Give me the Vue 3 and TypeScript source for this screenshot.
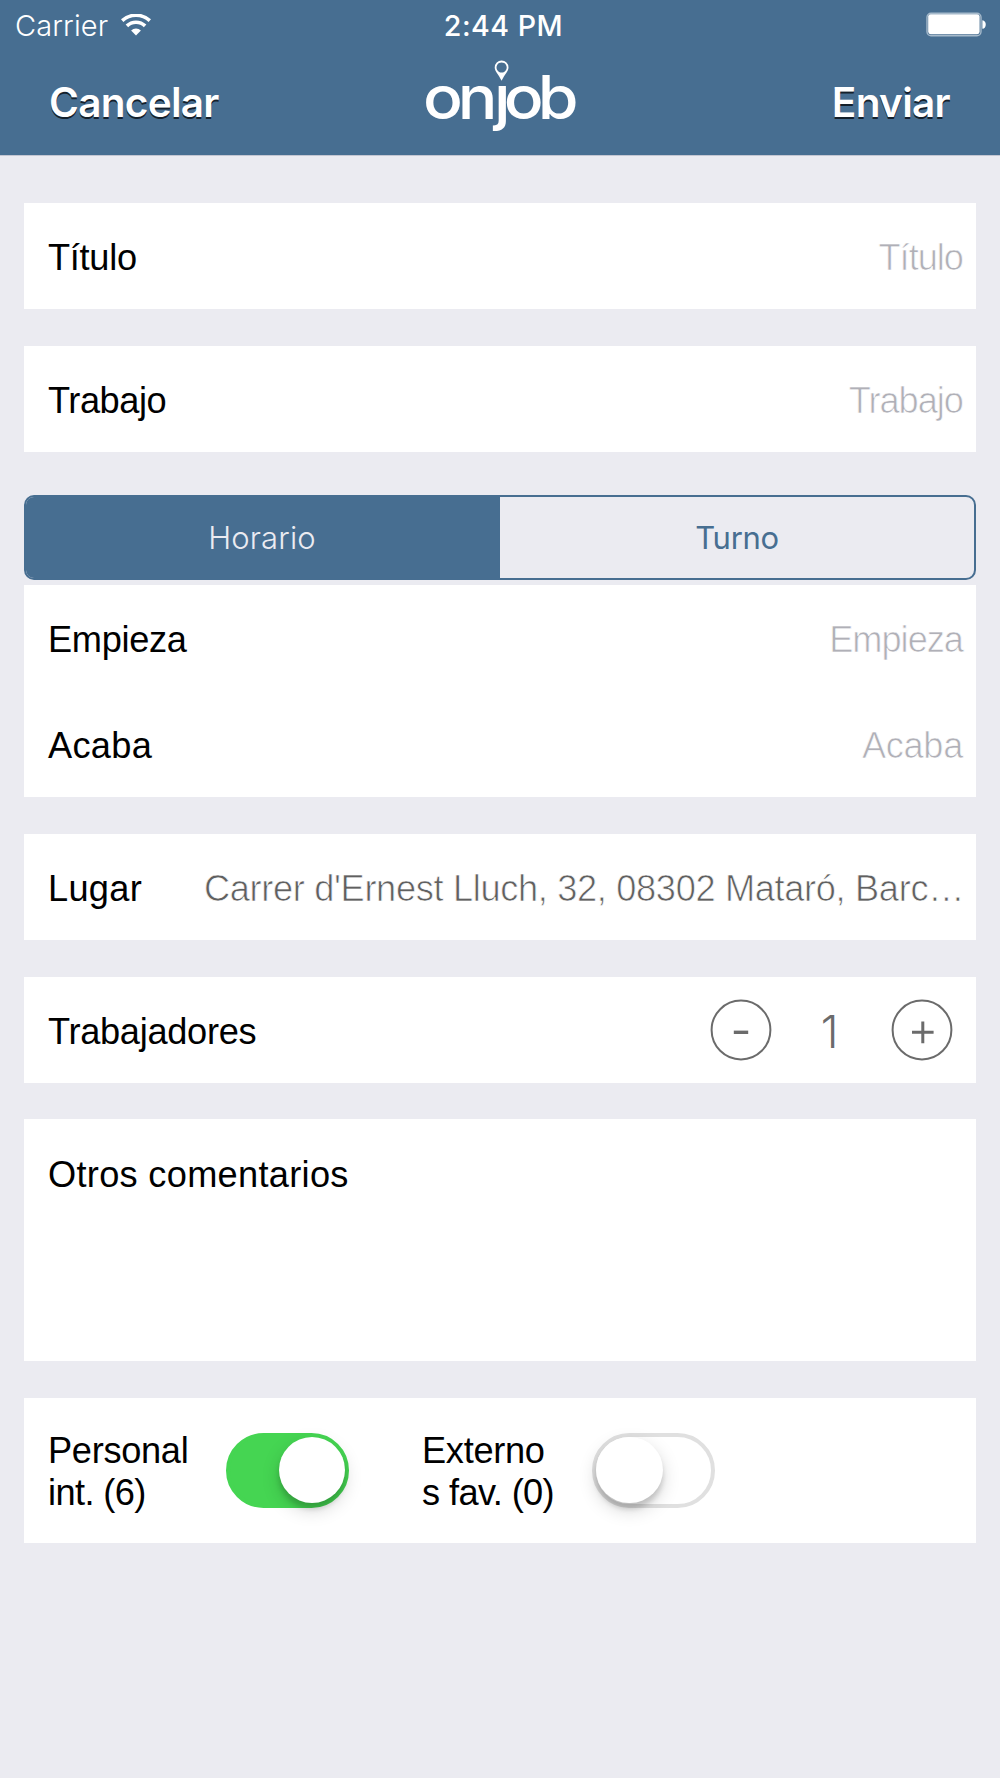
<script setup lang="ts">
import { ref } from 'vue'

type Mode = 'Horario' | 'Turno'

const modes: Mode[] = ['Horario', 'Turno']
const mode = ref<Mode>('Horario')
const workers = ref<number>(1)
const internal = ref<boolean>(true)
const external = ref<boolean>(false)
const place = "Carrer d'Ernest Lluch, 32, 08302 Mataró, Barc…"
</script>

<template>
  <div class="screen">
    <header class="header">
      <div class="status">
        <div class="carrier">
          <span>Carrier</span>
          <svg class="wifi" width="30" height="22" viewBox="0 0 30 22">
            <g fill="none" stroke="#fff" stroke-width="3.6">
              <path d="M1.2 6.6 A20.5 20.5 0 0 1 28.8 6.6" />
              <path d="M5.9 11.9 A13 13 0 0 1 24.1 11.9" />
            </g>
            <path d="M10.1 16.4 A7.2 7.2 0 0 1 19.9 16.4 L15 21.6 Z" fill="#fff" />
          </svg>
        </div>
        <span class="clock">2:44 PM</span>
        <svg class="battery" width="62" height="26" viewBox="0 0 62 26">
          <rect x="1" y="1.2" width="54" height="22.6" rx="4" fill="none" stroke="#a6bacb" stroke-width="1.4" />
          <rect x="2.2" y="2.2" width="51.4" height="20" rx="2.4" fill="#fff" />
          <path d="M56.4 8.2 C60.9 8.6 60.9 16.4 56.4 16.8 Z" fill="#fff" />
        </svg>
      </div>
      <nav class="nav">
        <span class="action cancel">Cancelar</span>
        <svg class="logo" width="160" height="80" viewBox="0 0 160 80">
          <text transform="scale(1.1 1)" y="60.6" x="2.8 34.3 67.2 76.1 107">onjob</text>
          <rect x="74" y="8" width="16" height="18.5" fill="#476e91" />
          <path
            fill="#fff"
            fill-rule="evenodd"
            d="M81.6 2.6 a6.9 6.9 0 0 1 6.9 6.9 c0 3.6 -3.6 6.6 -6.9 13.2 c-3.3 -6.6 -6.9 -9.6 -6.9 -13.2 a6.9 6.9 0 0 1 6.9 -6.9 Z M81.6 4.4 a5.1 5.1 0 1 0 0.01 0 Z"
          />
        </svg>
        <span class="action send">Enviar</span>
      </nav>
    </header>

    <main class="form">
      <section class="card row">
        <span class="label">Título</span><span class="value hint">Título</span>
      </section>
      <section class="card row second">
        <span class="label tight">Trabajo</span><span class="value hint">Trabajo</span>
      </section>

      <div class="segments">
        <div
          v-for="m in modes"
          :key="m"
          class="segment"
          :class="{ active: m === mode }"
          @click="mode = m"
        >{{ m }}</div>
      </div>

      <section class="card times">
        <div class="row">
          <span class="label">Empieza</span><span class="value hint">Empieza</span>
        </div>
        <div class="row">
          <span class="label loose">Acaba</span><span class="value hint last">Acaba</span>
        </div>
      </section>

      <section class="card row place">
        <span class="label loose">Lugar</span><span class="value address">{{ place }}</span>
      </section>

      <section class="card row workers">
        <span class="label">Trabajadores</span>
        <div class="stepper">
          <svg class="round" viewBox="0 0 62 62" @click="workers--">
            <circle cx="31" cy="31" r="29.4" />
            <path d="M23.8 33.3 H38.2" stroke-width="3.4" />
          </svg>
          <span class="count">{{ workers }}</span>
          <svg class="round" viewBox="0 0 62 62" @click="workers++">
            <circle cx="31" cy="31" r="29.4" />
            <path d="M21 33.3 H42.6 M31.8 22.4 V44.2" stroke-width="3" />
          </svg>
        </div>
      </section>

      <section class="card comments">
        <span class="label loose">Otros comentarios</span>
      </section>

      <section class="card staff">
        <span class="label name">Personal<br /><span class="narrow">int. (6)</span></span>
        <div class="switch" :class="{ on: internal }" @click="internal = !internal"><i class="knob"></i></div>
        <span class="label name ext">Externo<br /><span class="narrow">s fav. (0)</span></span>
        <div class="switch" :class="{ on: external }" @click="external = !external"><i class="knob"></i></div>
      </section>
    </main>
  </div>
</template>

<style>
body {
  background: #ebebf1;
}
</style>

<style scoped>
.screen {
  width: 1000px;
  height: 1778px;
  overflow: hidden;
  background: #ebebf1;
  font-family: "Liberation Sans", Arial, sans-serif;
}
.screen * {
  box-sizing: border-box;
}
.header {
  height: 156px;
  background: #476e91;
  border-bottom: 1px solid #c3c6d2;
  color: #fff;
  font-family: Inter, sans-serif;
}
.status {
  height: 50px;
  display: grid;
  grid-template-columns: 1fr auto 1fr;
  align-items: center;
  padding: 0 12px 0 15px;
  font-size: 29px;
}
.carrier {
  display: flex;
  align-items: center;
  gap: 13px;
  font-weight: 350;
  letter-spacing: 0.1px;
}
.clock {
  font-weight: 500;
  font-size: 28.6px;
  letter-spacing: 0.5px;
  padding-left: 4px;
}
.battery {
  justify-self: end;
}
.nav {
  height: 105px;
  display: grid;
  grid-template-columns: 1fr 160px 1fr;
  padding: 8px 50px 0 49px;
}
.action {
  font-size: 40.5px;
  font-weight: 600;
  line-height: 49px;
  padding-top: 20px;
  letter-spacing: -0.7px;
  text-shadow: 0 2px 0 #14202b;
}
.send {
  justify-self: end;
}
.logo text {
  font-family: Inter, sans-serif;
  font-size: 60px;
  font-weight: 500;
  fill: #fff;
}
.form {
  padding: 47px 24px 0;
}
.card {
  background: #fff;
}
.row {
  height: 106px;
  display: flex;
  align-items: center;
  justify-content: space-between;
  padding: 4px 12px 0 24px;
}
.second {
  margin-top: 36.5px;
}
.label {
  font-size: 36.2px;
  letter-spacing: -0.3px;
  color: #000;
}
.tight {
  letter-spacing: -0.45px;
}
.loose {
  letter-spacing: 0.3px;
}
.value {
  font-size: 36.2px;
  letter-spacing: -0.33px;
  white-space: nowrap;
  -webkit-text-stroke: 0.7px #fff;
}
.hint {
  color: #b0b0b7;
  letter-spacing: -1px;
  margin-right: 1px;
}
.last {
  letter-spacing: -0.3px;
}
.address {
  color: #606060;
}
.segments {
  height: 85px;
  margin-top: 43.5px;
  display: flex;
  border: 2.5px solid #476e91;
  border-radius: 10px;
  overflow: hidden;
}
.segment {
  flex: 1;
  display: flex;
  align-items: center;
  justify-content: center;
  font-family: Inter, sans-serif;
  font-size: 31px;
  letter-spacing: -0.3px;
  color: #476e91;
}
.segment.active {
  background: #476e91;
  color: #ebebf1;
  font-weight: 350;
  letter-spacing: 0.15px;
  text-indent: -2px;
}
.times {
  margin-top: 5px;
}
.place {
  margin-top: 37px;
}
.workers {
  margin-top: 37px;
  padding-top: 0;
}
.workers .label {
  padding-top: 4px;
}
.stepper {
  display: flex;
  align-items: center;
  justify-content: space-between;
  width: 243px;
  margin-right: 11.5px;
}
.round {
  width: 62px;
  height: 62px;
  fill: none;
  stroke: #6b6b6b;
  stroke-width: 2;
}
.count {
  font-family: Inter, sans-serif;
  font-size: 45px;
  font-weight: 300;
  color: #6b6b6b;
  padding: 2px 3px 0 0;
}
.comments {
  height: 242px;
  margin-top: 36px;
  padding: 35px 24px 0;
}
.staff {
  height: 145px;
  margin-top: 37px;
  padding: 0 24px;
  display: flex;
  align-items: center;
}
.name {
  width: 178px;
  line-height: 42px;
  padding-top: 3px;
}
.ext {
  width: 170px;
  margin-left: 73px;
}
.narrow {
  letter-spacing: -0.6px;
}
.switch {
  width: 123px;
  height: 75px;
  margin-bottom: 1px;
  border-radius: 38px;
  border: 4.5px solid #e0e0e0;
  display: flex;
}
.switch.on {
  border-color: #45d552;
  background: #45d552;
  justify-content: flex-end;
}
.knob {
  width: 66.5px;
  height: 66.5px;
  border-radius: 50%;
  background: #fff;
  box-shadow: 0 7px 18px rgba(0, 0, 0, 0.17), 0 6px 5px rgba(0, 0, 0, 0.14);
}
</style>
